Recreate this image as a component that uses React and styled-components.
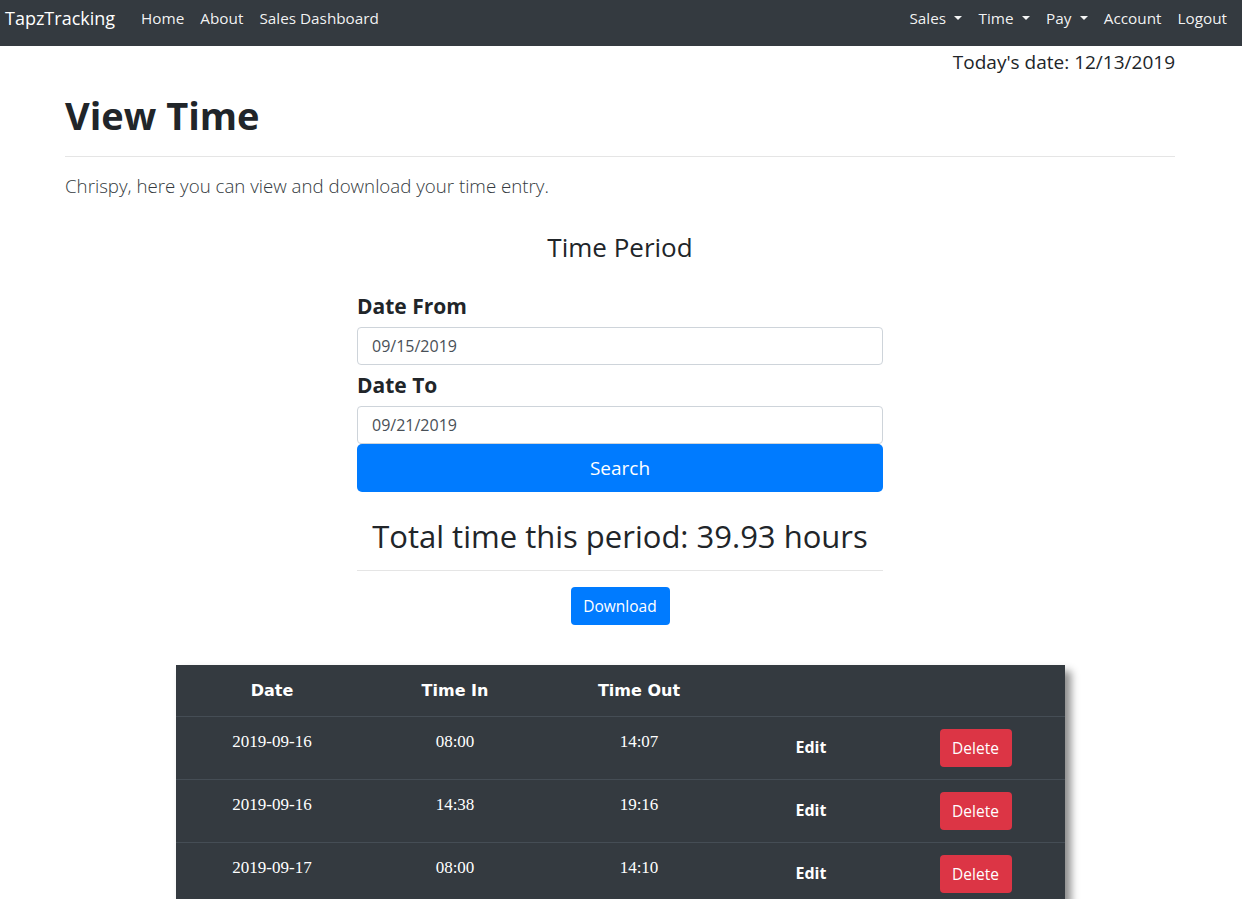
import React from "react";
import styled, { createGlobalStyle } from "styled-components";

const GlobalStyle = createGlobalStyle`
	* { box-sizing: border-box; }
	body {
		margin: 0;
		font-family: "Open Sans", "Noto Sans", sans-serif;
		font-size: 16px;
		line-height: 1.5;
		color: #212529;
		background: #fff;
	}
`;

const rows = [
	{ date: "2019-09-16", timeIn: "08:00", timeOut: "14:07" },
	{ date: "2019-09-16", timeIn: "14:38", timeOut: "19:16" },
	{ date: "2019-09-17", timeIn: "08:00", timeOut: "14:10" },
];

const cols = [192, 174, 194, 150, 179];

export default function App() {
	return (
		<>
			<GlobalStyle />
			<Navbar>
				<Brand>TapzTracking</Brand>
				<NavList>
					<NavLink>Home</NavLink>
					<NavLink>About</NavLink>
					<NavLink>Sales Dashboard</NavLink>
				</NavList>
				<NavList right>
					<NavLink dropdown>Sales</NavLink>
					<NavLink dropdown>Time</NavLink>
					<NavLink dropdown>Pay</NavLink>
					<NavLink>Account</NavLink>
					<NavLink>Logout</NavLink>
				</NavList>
			</Navbar>
			<Container>
				<TodayDate>Today's date: 12/13/2019</TodayDate>
				<PageTitle>View Time</PageTitle>
				<Rule />
				<Lead>Chrispy, here you can view and download your time entry.</Lead>
				<FormBox>
					<SectionTitle>Time Period</SectionTitle>
					<Label>Date From</Label>
					<Input defaultValue="09/15/2019" />
					<Label>Date To</Label>
					<Input defaultValue="09/21/2019" last />
					<SearchButton>Search</SearchButton>
					<Total>Total time this period: 39.93 hours</Total>
					<Rule narrow />
					<DownloadRow>
						<PrimaryButton>Download</PrimaryButton>
					</DownloadRow>
				</FormBox>
			</Container>
			<TableWrap>
				<Table>
					<colgroup>
						{cols.map((w, i) => (
							<col key={i} style={{ width: `${w}px` }} />
						))}
					</colgroup>
					<thead>
						<tr>
							<Th>Date</Th>
							<Th>Time In</Th>
							<Th>Time Out</Th>
							<Th />
							<Th />
						</tr>
					</thead>
					<tbody>
						{rows.map((r, i) => (
							<tr key={i}>
								<Td>{r.date}</Td>
								<Td>{r.timeIn}</Td>
								<Td>{r.timeOut}</Td>
								<Td>
									<EditLink>Edit</EditLink>
								</Td>
								<Td>
									<DangerButton>Delete</DangerButton>
								</Td>
							</tr>
						))}
					</tbody>
				</Table>
			</TableWrap>
		</>
	);
}

const Navbar = styled.nav`
	display: flex;
	align-items: center;
	height: 46px;
	padding: 0 7px 11px 5px;
	background-color: #343a40;
`;

const Brand = styled.span`
	font-size: 18px;
	color: #fff;
	margin-right: 18px;
	line-height: 30px;
`;

const NavList = styled.div`
	display: flex;
	margin-left: ${(props) => (props.right ? "auto" : "0")};
`;

const NavLink = styled.span`
	padding: 0 8px;
	color: rgba(255, 255, 255, 0.95);
	font-size: 15.3px;
	line-height: 24px;
	&::after {
		${(props) =>
			props.dropdown
				? `content: "";
		display: inline-block;
		margin-left: 0.55em;
		vertical-align: 0.255em;
		border-top: 0.32em solid;
		border-right: 0.32em solid transparent;
		border-left: 0.32em solid transparent;`
				: ""}
	}
`;

const Container = styled.div`
	width: 1140px;
	margin: 0 52px 0 50px;
	padding: 0 15px;
`;

const TodayDate = styled.div`
	text-align: right;
	font-size: 19px;
	line-height: 30px;
	padding-top: 1px;
`;

const PageTitle = styled.h1`
	font-size: 38px;
	font-weight: 700;
	line-height: 1.2;
	margin: 16px 0 17px;
`;

const Rule = styled.hr`
	border: 0;
	border-top: 1px solid rgba(0, 0, 0, 0.1);
	margin: ${(props) => (props.narrow ? "15px 0 16px" : "0 0 15px")};
`;

const Lead = styled.p`
	font-size: 18.7px;
	font-weight: 300;
	line-height: 28px;
	color: #343a40;
	margin: 0 0 32px;
`;

const FormBox = styled.div`
	width: 526px;
	margin: 0 auto;
`;

const SectionTitle = styled.h3`
	font-size: 26px;
	font-weight: 400;
	text-align: center;
	line-height: 1.2;
	margin: 0 0 30px;
`;

const Label = styled.label`
	display: block;
	font-size: 21px;
	font-weight: 700;
	line-height: 26px;
	margin-bottom: 8px;
`;

const Input = styled.input`
	display: block;
	width: 100%;
	height: 38px;
	padding: 6px 14px;
	font-family: inherit;
	font-size: 16px;
	color: #495057;
	border: 1px solid #ced4da;
	border-radius: 4px;
	margin-bottom: ${(props) => (props.last ? "0" : "7px")};
`;

const SearchButton = styled.button`
	display: block;
	width: 100%;
	height: 48px;
	font-family: inherit;
	font-size: 19px;
	color: #fff;
	background: #007bff;
	border: 0;
	border-radius: 5px;
`;

const Total = styled.h2`
	font-size: 31px;
	font-weight: 500;
	text-align: center;
	line-height: 1.2;
	margin: 26px 0 0;
`;

const DownloadRow = styled.div`
	display: flex;
	justify-content: center;
`;

const PrimaryButton = styled.button`
	width: 99px;
	height: 38px;
	padding: 0;
	font-family: inherit;
	font-size: 15.5px;
	color: #fff;
	background: #007bff;
	border: 0;
	border-radius: 4px;
`;

const TableWrap = styled.div`
	width: 889px;
	margin: 40px 0 0 176px;
	box-shadow: 6px 6px 8px rgba(0, 0, 0, 0.45);
`;

const Table = styled.table`
	width: 100%;
	table-layout: fixed;
	border-collapse: collapse;
	background: #343a40;
	color: #fff;
`;

const Th = styled.th`
	height: 52px;
	padding: 12px;
	font-family: "DejaVu Sans", Verdana, sans-serif;
	font-size: 16px;
	font-weight: 700;
	text-align: center;
	vertical-align: middle;
	border-bottom: 1px solid #454d55;
`;

const Td = styled.td`
	height: 63px;
	padding: 12px;
	font-family: "Liberation Serif", "Times New Roman", serif;
	font-size: 17px;
	text-align: center;
	vertical-align: top;
	border-bottom: 1px solid #454d55;
`;

const EditLink = styled.span`
	display: inline-block;
	padding: 6px 0;
	font-family: "Open Sans", sans-serif;
	font-size: 16px;
	font-weight: 700;
	line-height: 24px;
`;

const DangerButton = styled.button`
	width: 72px;
	height: 38px;
	padding: 0;
	font-family: "Open Sans", sans-serif;
	font-size: 15.5px;
	color: #fff;
	background: #dc3545;
	border: 0;
	border-radius: 4px;
`;
